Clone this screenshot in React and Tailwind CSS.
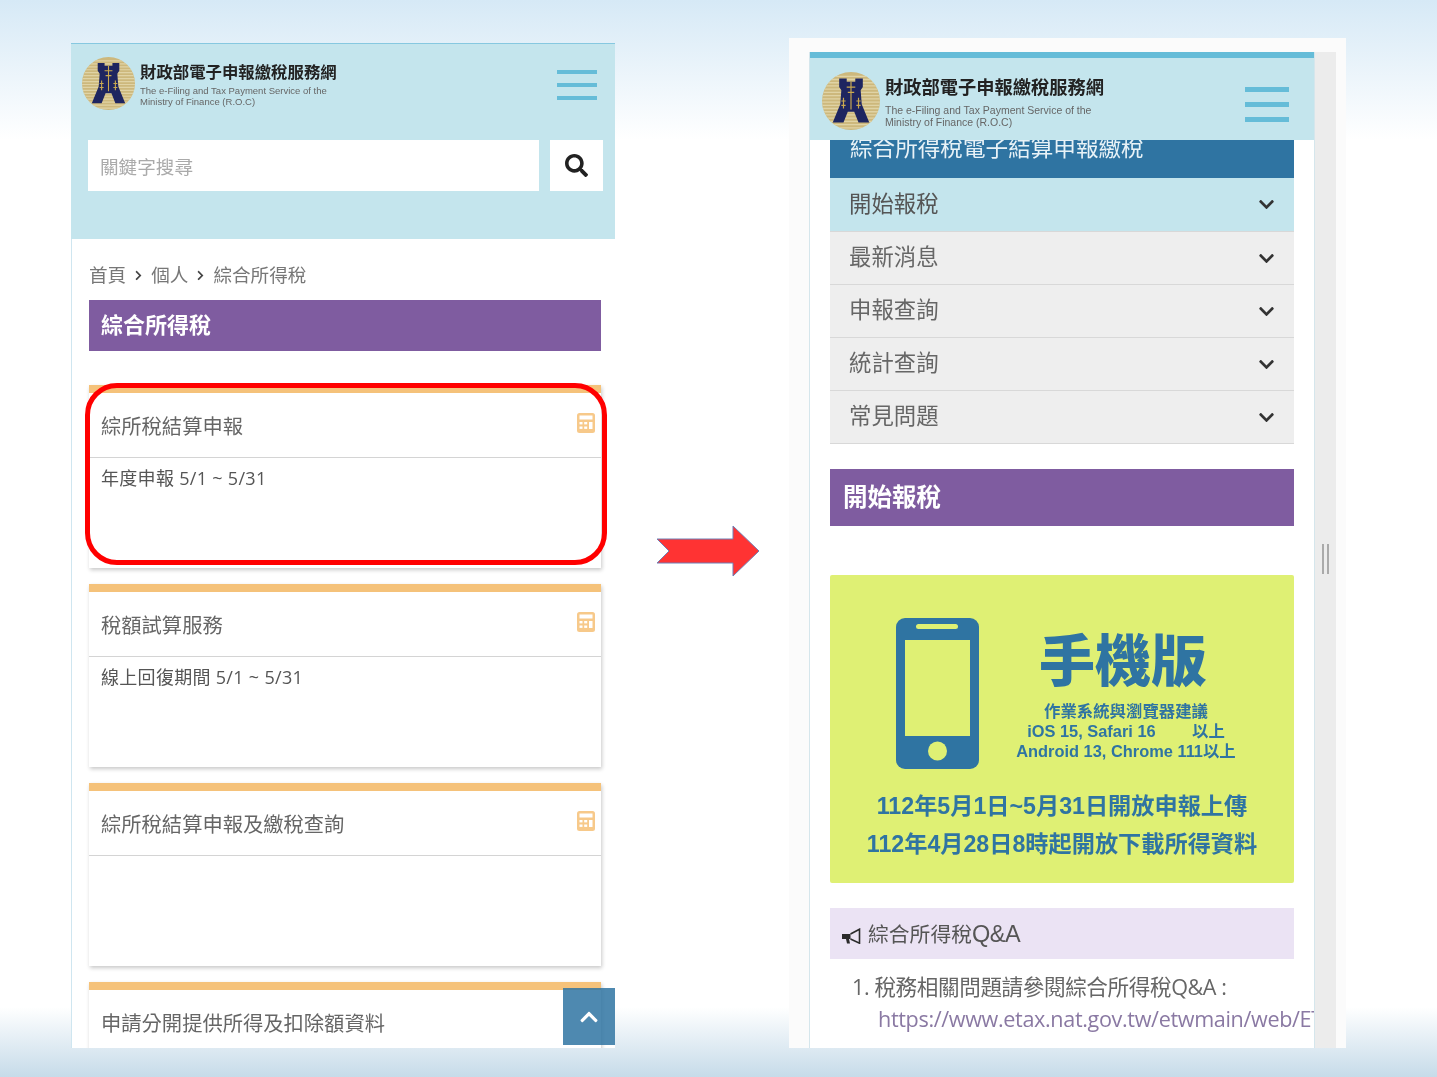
import { FaChevronDown, FaChevronRight, FaChevronUp, FaSearch } from "react-icons/fa";

const cjk = "font-['Liberation_Sans','Noto_Sans_CJK_TC',sans-serif]";
const openSans = "font-['Open_Sans','Noto_Sans_CJK_TC',sans-serif]";

const cards = [
  { title: "綜所稅結算申報", note: "年度申報 5/1 ~ 5/31" },
  { title: "稅額試算服務", note: "線上回復期間 5/1 ~ 5/31" },
  { title: "綜所稅結算申報及繳稅查詢", note: "" },
];

const menuItems = ["最新消息", "申報查詢", "統計查詢", "常見問題"];

const Logo = ({ size, id }) => (
  <svg viewBox="0 0 54 54" width={size} height={size} className="shrink-0">
    <clipPath id={id}>
      <circle cx="27" cy="27" r="27" />
    </clipPath>
    <g clipPath={`url(#${id})`}>
      <rect width="54" height="54" fill="#cdb87c" />
      {[4, 7, 10, 13, 16, 19, 22, 25, 28, 31, 34, 37, 40, 43, 46, 49, 52].map((y) => (
        <line key={y} x1="0" x2="54" y1={y} y2={y} stroke="#e0d3a5" strokeWidth="1.2" />
      ))}
    </g>
    <path
      d="M16 6h7v3h8V6h7v8l-2 3 1 13 7 17-10 0-4-10h-6l-4 10-10 0 7-17 1-13-2-3z"
      fill="#1e2560"
    />
    <path
      d="M27 9v26M23 14h8M24 19h6M20 24v10M34 24v10M18 27h4M18 31h4M32 27h4M32 31h4"
      stroke="#c9a94f"
      strokeWidth="1.1"
      fill="none"
    />
  </svg>
);

const Hamburger = ({ barClass, gapClass }) => (
  <div className={`flex flex-col ${gapClass}`}>
    <span className={`block ${barClass} bg-[#65bcd8]`} />
    <span className={`block ${barClass} bg-[#65bcd8]`} />
    <span className={`block ${barClass} bg-[#65bcd8]`} />
  </div>
);

const Brand = ({ logo, logoId, titleClass, subClass }) => (
  <div className="flex items-center gap-[5px]">
    <Logo size={logo} id={logoId} />
    <div>
      <div className={`font-bold whitespace-nowrap text-[#222] ${titleClass}`}>財政部電子申報繳稅服務網</div>
      <div className={`text-[#666] whitespace-nowrap ${subClass}`}>
        The e-Filing and Tax Payment Service of the
        <br />
        Ministry of Finance (R.O.C)
      </div>
    </div>
  </div>
);

const CalcIcon = () => (
  <svg viewBox="0 0 18 20" width="18" height="20" className="shrink-0">
    <rect width="18" height="20" rx="2.5" fill="#f7c98a" />
    <rect x="2.5" y="2.5" width="13" height="4" fill="#fff" />
    <rect x="2.5" y="9" width="3" height="2.4" fill="#fff" />
    <rect x="7.2" y="9" width="3" height="2.4" fill="#fff" />
    <rect x="2.5" y="13.5" width="3" height="2.4" fill="#fff" />
    <rect x="7.2" y="13.5" width="3" height="2.4" fill="#fff" />
    <rect x="12" y="9" width="3.5" height="7" fill="#fff" />
  </svg>
);

const Bullhorn = () => (
  <svg viewBox="0 0 19 16" width="19" height="16" className="mt-[3px] shrink-0">
    <path d="M0 6h8.5v5H7l1 4.5H5L4 11H0z" fill="#2b2b2b" />
    <path d="M8.5 6L17.5 1.2v14L8.5 11" fill="none" stroke="#2b2b2b" strokeWidth="1.6" />
  </svg>
);

const ServiceCard = ({ title, note }) => (
  <div className="h-[183px] shrink-0 border-t-8 border-[#f5c27a] bg-white shadow-[1px_2px_4px_rgba(0,0,0,0.22)]">
    <div className="flex h-[65px] items-start justify-between border-b border-[#d4d4d4] pl-3 pr-[6px] pt-5">
      <span className="mt-[1px] text-[20.3px] leading-[26px] text-[#666]">{title}</span>
      <CalcIcon />
    </div>
    <p className={`pl-3 pt-2 text-[18px] leading-[24px] tracking-[0.3px] text-[#555] ${openSans}`}>{note}</p>
  </div>
);

const MobileBanner = () => (
  <div className="flex h-[308px] flex-col rounded-[2px] bg-[#dff074] text-[#2f74a2]">
    <div className="flex pl-[66px] pt-[43px]">
      <svg viewBox="0 0 83 151" width="83" height="151" className="shrink-0">
        <rect width="83" height="151" rx="9" fill="#2f74a2" />
        <rect x="20" y="6" width="42" height="5" rx="2.5" fill="#dff074" />
        <rect x="9" y="22" width="65" height="96" fill="#dff074" />
        <circle cx="41.5" cy="133" r="9.5" fill="#dff074" />
      </svg>
      <div className="flex w-[256px] flex-col items-center pl-[32px] font-bold">
        <div className="mt-[12px] text-[56px] leading-[64px] font-black whitespace-nowrap">手機版</div>
        <div className="mt-[7px] flex flex-col items-center pl-[6px] text-[16.4px] leading-[20px]">
          <div className="whitespace-nowrap">作業系統與瀏覽器建議</div>
          <div className="whitespace-pre">iOS 15, Safari 16{"        "}以上</div>
          <div className="whitespace-nowrap">Android 13, Chrome 111以上</div>
        </div>
      </div>
    </div>
    <div className="mt-[18px] text-center text-[23.2px] leading-[38px] font-bold whitespace-nowrap">
      <div>112年5月1日~5月31日開放申報上傳</div>
      <div>112年4月28日8時起開放下載所得資料</div>
    </div>
  </div>
);

const App = () => {
  return (
    <div
      className={`relative flex h-[1077px] w-[1437px] items-start overflow-hidden bg-[linear-gradient(180deg,#d6e9f6_0%,#ffffff_13%,#ffffff_93.5%,#c6dbe9_100%)] ${cjk}`}
    >
      {/* left phone capture */}
      <section className="relative ml-[71px] mt-[43px] h-[1005px] w-[544px] shrink-0 overflow-hidden bg-white blur-[0.3px]">
        <header className="h-[196px] border-t border-[#86c8e0] bg-[#c4e5ed]">
          <div className="flex items-center justify-between pl-[11px] pr-[18px] pt-[13px]">
            <Brand
              logo={53}
              logoId="logo-left"
              titleClass="mt-[2px] text-[16.4px] leading-[20px]"
              subClass="mt-[3px] text-[9.5px] leading-[11px]"
            />
            <div className="pt-[3px]">
              <Hamburger barClass="h-1 w-10" gapClass="gap-[9px]" />
            </div>
          </div>
          <div className="mt-[30px] flex gap-[11px] pl-[17px]">
            <div className="flex h-[51px] w-[451px] items-center bg-white pl-3 pt-[5px] text-[18.6px] text-[#aaa]">關鍵字搜尋</div>
            <div className="flex h-[51px] w-[53px] items-center justify-center bg-white text-[#222]">
              <FaSearch size={23} />
            </div>
          </div>
        </header>
        <div className="h-[809px] border-l border-[#cfe6f0] pl-[17px] pr-[14px]">
          <nav className="flex h-[61px] items-center gap-[7px] pt-3 text-[18.6px] text-[#777]">
            <span>首頁</span>
            <FaChevronRight size={11} className="text-[#444]" />
            <span>個人</span>
            <FaChevronRight size={11} className="text-[#444]" />
            <span>綜合所得稅</span>
          </nav>
          <h1 className="flex h-[51px] items-center bg-[#7f5ca0] pl-3 text-[22px] font-bold text-white">綜合所得稅</h1>
          <div className="mt-[34px] flex flex-col gap-4">
            {cards.map((card) => (
              <ServiceCard key={card.title} title={card.title} note={card.note} />
            ))}
            <div className="h-[183px] shrink-0 border-t-8 border-[#f5c27a] bg-white pl-3 pt-[21px] text-[20.3px] leading-[26px] text-[#666] shadow-[1px_2px_4px_rgba(0,0,0,0.22)]">
              申請分開提供所得及扣除額資料
            </div>
          </div>
        </div>
        <button className="absolute bottom-[3px] right-0 flex h-[57px] w-[52px] items-center justify-center bg-[#2f74a2]/85 text-white">
          <FaChevronUp size={20} />
        </button>
        {/* red highlight over the first card */}
        <div className="absolute left-[14px] top-[340px] h-[182px] w-[522px] rounded-[32px] border-[5px] border-[#ff0000]" />
      </section>

      {/* arrow between captures */}
      <svg viewBox="0 0 104 52" width="104" height="52" className="ml-[41px] mt-[525px] shrink-0">
        <path d="M1 14h76V1l26 25-26 25V38H1l12-12z" fill="#ff3333" stroke="#6f7fb5" strokeWidth="1" />
      </svg>

      {/* right phone capture */}
      <section className="ml-[29px] mt-[38px] flex h-[1010px] w-[557px] shrink-0 bg-[#fbfbfb] pl-[20px] pt-[14px] blur-[0.3px]">
        <div className="relative h-[996px] w-[506px] shrink-0 overflow-hidden border-x border-[#d5e6ec] bg-white">
          <header className="relative z-10 h-[88px] border-t-[6px] border-[#65bcd8] bg-[#c4e5ed]">
            <div className="flex items-center justify-between pl-[12px] pr-[25px] pt-[14px]">
              <Brand
                logo={58}
                logoId="logo-right"
                titleClass="mt-[3px] text-[18.25px] leading-[22px]"
                subClass="mt-[5px] text-[10.5px] leading-[12px]"
              />
              <div className="pt-[6px]">
                <Hamburger barClass="h-[5px] w-[44px]" gapClass="gap-[10px]" />
              </div>
            </div>
          </header>
          <div className="px-[20px]">
            <div className="h-[38px] overflow-hidden bg-[#2f74a2] pl-[20px] text-[22.6px] leading-[18px] whitespace-nowrap text-[#e8f2f7]">
              綜合所得稅電子結算申報繳稅
            </div>
            <div className="flex h-[54px] items-center justify-between border-b border-[#d8d8d8] bg-[#c4e5ed] pl-[19px] pr-[19px] text-[22.4px] text-[#555]">
              開始報稅
              <FaChevronDown size={17} className="text-[#333]" />
            </div>
            {menuItems.map((item) => (
              <div
                key={item}
                className="flex h-[53px] items-center justify-between border-b border-[#d8d8d8] bg-[#eeeeee] pl-[19px] pr-[19px] text-[22.4px] text-[#666]"
              >
                {item}
                <FaChevronDown size={17} className="text-[#333]" />
              </div>
            ))}
            <h2 className="mt-[25px] flex h-[57px] items-center bg-[#7f5ca0] pl-[13px] pt-[2px] text-[24.5px] font-bold text-white">開始報稅</h2>
            <div className="mt-[49px]">
              <MobileBanner />
            </div>
            <div className="mt-[25px] flex h-[51px] items-center gap-[7px] bg-[#ebe3f4] pl-3 pt-[2px] text-[20.8px] text-[#555]">
              <Bullhorn />
              <span>
                綜合所得稅<span className="text-[23.5px] tracking-[-0.5px]">Q&amp;A</span>
              </span>
            </div>
            <div className={`mt-3 pl-[22px] text-[21.6px] leading-[32px] whitespace-nowrap text-[#666] ${openSans}`}>
              <div className="tracking-[-0.4px]">1. 稅務相關問題請參閱綜合所得稅Q&amp;A :</div>
              <div className="pl-[26px] tracking-[-0.35px] text-[#8a79a3]">https://www.etax.nat.gov.tw/etwmain/web/ETW118W</div>
            </div>
          </div>
        </div>
        <div className="flex h-[996px] w-[21px] shrink-0 items-center justify-center bg-[#ececec] pt-[18px]">
          <div className="h-[30px] w-[7px] border-x-2 border-[#aaa]" />
        </div>
      </section>
    </div>
  );
};

export default App;
